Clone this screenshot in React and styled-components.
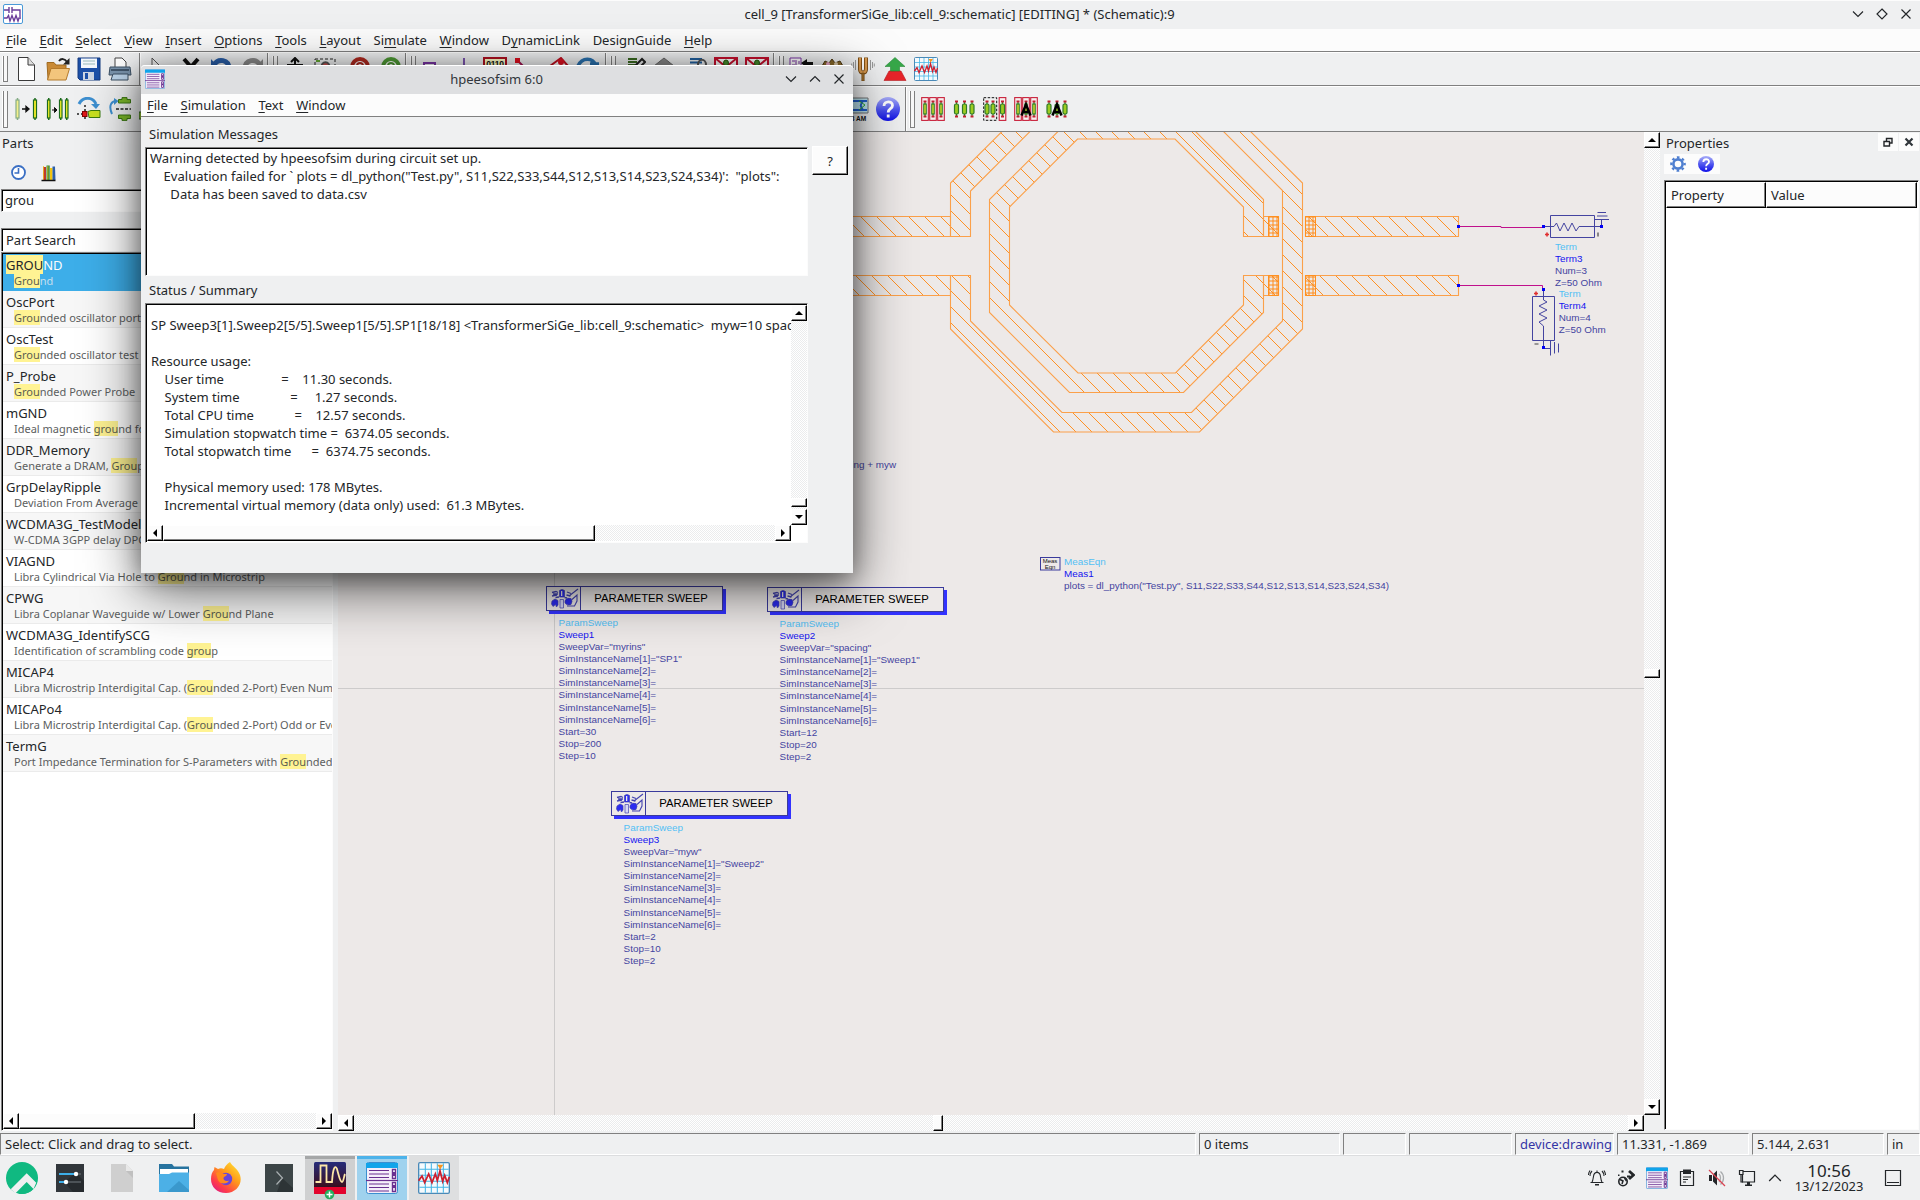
import React from "react";
import styled, { createGlobalStyle, css } from "styled-components";

const Global = createGlobalStyle`
  html, body { margin: 0; padding: 0; }
  body { width: 1920px; height: 1200px; overflow: hidden; background: #eff0f1; }
  * { box-sizing: border-box; }
  svg { display: block; flex: none; }
`;

const ink = "#232629";
const ui = `"Noto Sans", sans-serif`;
const checker = css`
  background-image: conic-gradient(#fff 25%, #ebeced 0 50%, #fff 0 75%, #ebeced 0);
  background-size: 2px 2px;
`;

/* ---------- shell ---------- */
const Desktop = styled.div`
  width: 1920px; height: 1200px; position: relative; overflow: hidden;
  display: flex; flex-direction: column;
  background: #eff0f1; color: ${ink}; font: 13px/18px ${ui};
`;
const TitleBar = styled.div`
  height: 29px; flex: none; display: flex; align-items: center; padding: 0 8px 2px 3px;
  border-top: 1px solid #fcfcfc;
`;
const TitleText = styled.div`
  flex: 1; text-align: center; white-space: pre; padding-left: ${p => p.$shift || 0}px;
`;
const WinButtons = styled.div`display: flex; gap: ${p => p.$gap}px;`;
const MenuBar = styled.div`
  height: ${p => p.$h}px; flex: none; display: flex; gap: 12.7px; padding-left: 6px; align-items: center;
  background: #fcfcfc; border-bottom: 1px solid #808080;
`;
const MenuItem = styled.span`
  white-space: pre;
  u { text-underline-offset: 2px; text-decoration-thickness: 1px; text-decoration-skip-ink: none; }
`;
const Toolbar = styled.div`
  height: ${p => p.$h}px; flex: none; display: flex; align-items: center;
  border-bottom: 1px solid #808080; border-top: 1px solid #fff;
`;
const Slot = styled.div`
  width: 24px; height: 24px; margin-left: ${p => p.$ml}px; flex: none;
`;
const Grip = styled.div`
  width: 5px; height: ${p => p.$h}px; margin-left: ${p => p.$ml}px; flex: none;
  border: 1px solid #808080; border-top: 0; border-left-color: #808080;
  box-shadow: -1px 0 #fff; background: #f8f8f8;
`;
const Divider = styled.div`
  width: 1px; align-self: stretch; margin-left: ${p => p.$ml}px; background: #808080; flex: none;
  box-shadow: 1px 0 #fff;
`;

const Workspace = styled.div`flex: 1; min-height: 0; display: flex;`;

/* ---------- scrollbars ---------- */
const Track = styled.div`
  display: flex; flex: none; ${checker}
  flex-direction: ${p => (p.$v ? "column" : "row")};
  ${p => (p.$v ? "width: 16px;" : "height: 16px;")}
`;
const Cap = styled.div`
  width: 16px; height: 16px; flex: none; background: #fcfcfc;
  display: flex; align-items: center; justify-content: center;
  border: 1px solid; border-color: #fff #000 #000 #fff; box-shadow: inset -1px -1px #808080;
`;
const Thumb = styled(Cap)`
  ${p => (p.$v ? `height: ${p.$size}px; margin-top: ${p.$at}px;` : `width: ${p.$size}px; margin-left: ${p.$at}px;`)}
`;
const Gap = styled.div`flex: 1;`;
const turns = { up: 0, right: 90, down: 180, left: 270 };
const Arrow = ({ dir }) => (
  <Cap>
    <svg width="8" height="8" viewBox="0 0 8 8" style={{ transform: `rotate(${turns[dir]}deg)` }}>
      <path d="M4 2 L8 6 H0 Z" fill="#000" />
    </svg>
  </Cap>
);
const Scroll = ({ v, at, size }) => (
  <Track $v={v}>
    <Arrow dir={v ? "up" : "left"} />
    <Thumb $v={v} $at={at} $size={size} />
    <Gap />
    <Arrow dir={v ? "down" : "right"} />
  </Track>
);

/* ---------- parts ---------- */
const Parts = styled.div`width: 334px; flex: none; display: flex; flex-direction: column;`;
const PanelTitle = styled.div`height: 22px; padding: 2px 0 0 2px;`;
const PartsTools = styled.div`height: 35px; display: flex; gap: 11px; padding: 9px 0 0 9px;`;
const SearchBox = styled.div`
  margin: 0 2px 0 1px; height: 23px; background: #fff; padding: 1px 0 0 3px;
  border: 1px solid; border-color: #808080 #fcfcfc #fcfcfc #808080; box-shadow: inset 1px 1px #000;
`;
const PartsHeader = styled(SearchBox)`margin-top: 16px; height: 23px; padding: 3px 0 0 4px; line-height: 17px; border-bottom: 0;`;
const PartsList = styled.div`
  margin: 1px 1px 2px 1px; flex: 1; min-height: 0; background: #fff; display: flex; flex-direction: column;
  border: 1px solid; border-color: #808080 #fcfcfc #fcfcfc #808080; box-shadow: inset 1px 1px #000;
  padding: 1px 0 1px 1px; overflow: hidden;
`;
const PartRow = styled.div`
  height: 37px; flex: none; overflow: hidden; white-space: pre; padding: 2px 0 0 3px;
  background: ${p => (p.$sel ? "#3daee9" : p.$alt ? "#f7f7f7" : "#fff")};
  border-bottom: 1px solid ${p => (p.$sel ? "#3daee9" : "#ebebeb")};
  color: ${p => (p.$sel ? "#fcfcfc" : ink)};
`;
const PartName = styled.div`height: 17px; line-height: 18px; mark { padding: 1px 0 0; }`;
const PartDesc = styled.div`
  height: 16px; line-height: 15px; font-size: 11px; padding-left: 8px;
  color: ${p => (p.$sel ? "#c5dfee" : "#5c5e60")};
`;
const Mark = styled.mark`background: #fff393; color: ${p => (p.$dark ? ink : "#5c5e50")};`;

const hl = (text, dark) =>
  text.split(/(grou)/i).map((s, i) => (i % 2 ? <Mark key={i} $dark={dark}>{s}</Mark> : s));

const parts = [
  ["GROUND", "Ground"],
  ["OscPort", "Grounded oscillator port"],
  ["OscTest", "Grounded oscillator test"],
  ["P_Probe", "Grounded Power Probe"],
  ["mGND", "Ideal magnetic ground for"],
  ["DDR_Memory", "Generate a DRAM, Group"],
  ["GrpDelayRipple", "Deviation From Average"],
  ["WCDMA3G_TestModel", "W-CDMA 3GPP delay DPCH"],
  ["VIAGND", "Libra Cylindrical Via Hole to Ground in Microstrip"],
  ["CPWG", "Libra Coplanar Waveguide w/ Lower Ground Plane"],
  ["WCDMA3G_IdentifySCG", "Identification of scrambling code group"],
  ["MICAP4", "Libra Microstrip Interdigital Cap. (Grounded 2-Port) Even Num"],
  ["MICAPo4", "Libra Microstrip Interdigital Cap. (Grounded 2-Port) Odd or Even"],
  ["TermG", "Port Impedance Termination for S-Parameters with Grounded"],
];

/* ---------- canvas ---------- */
const CanvasArea = styled.div`
  width: 1322px; margin-left: 4px; flex: none; display: flex; flex-direction: column; padding-bottom: 2px;
`;
const CanvasRow = styled.div`flex: 1; min-height: 0; display: flex;`;
const Canvas = styled.div`
  flex: 1; position: relative; overflow: hidden; background: #ede9e8;
`;
const HRow = styled.div`display: flex; > :first-child { width: 1306px; }`;
const Label = styled.div`
  position: absolute; left: ${p => p.$x - 338}px; top: ${p => p.$y - 132}px;
  font: 9.89px/12.13px "Liberation Sans", Arial, sans-serif; color: #4444a0; white-space: pre;
`;
const Kind = styled.div`color: #52c0f5;`;
const Inst = styled.div`color: #1414f0;`;

const SweepBox = styled.div`
  position: absolute; left: ${p => p.$x - 338}px; top: ${p => p.$y - 132}px;
  width: 177px; height: 25px; display: flex; border: 1px solid #3a3a9c; background: #ede9e8;
  font: 11.3px/23px "Liberation Sans", Arial, sans-serif; color: #000;
  > span { flex: 1; text-align: center; border-left: 1px solid #3a3a9c; padding-right: 1px; }
`;
const SweepShadow = styled.div`
  position: absolute; left: ${p => p.$x - 335}px; top: ${p => p.$y - 129}px; width: 177px; height: 25px; background: #3232ff;
`;

const SweepGlyph = () => (
  <svg width="33" height="23" viewBox="0 0 33 23">
    <g fill="#2c2cf0" stroke="#4444b0" strokeWidth="0.7">
      <path d="M5 14L8 12L11 13.500V18L9.500 20L8.500 17.500L6 19.500L4.500 17Z" />
      <path d="M12.500 3.500Q15 1.500 17.500 3.500V10H12.500Z" /><path d="M14 4h1.300v5h-1.300z" fill="#ede9e8" stroke="none" />
      <path d="M18 13.500Q20 10 24 11.500Q26 14 24 17.500Q20 19 18 16Z" />
      <path d="M5 5.500l4-1 2 1M5 9l5-1M6 7h5M20 5l4 1.500M19.500 8l4 1" fill="none" strokeWidth="1.300" />
      <path d="M22 9L31 2M25 12.500L30 8V14L27.500 19H20" fill="none" strokeWidth="1.100" />
      <path d="M13 12.500H16.500V21H13Z" fill="#d8d8f4" />
      <path d="M8.500 10.500L12 10M17.500 10.500L20 11" fill="none" strokeWidth="1.500" />
    </g>
  </svg>
);

const SweepBlock = ({ x, y, name, v, inst, start, stop, step }) => (
  <>
    <SweepShadow $x={x} $y={y} />
    <SweepBox $x={x} $y={y}>
      <SweepGlyph />
      <span>PARAMETER SWEEP</span>
    </SweepBox>
    <Label $x={x + 12.6} $y={y + 30.7}>
      <Kind>ParamSweep</Kind>
      <Inst>{name}</Inst>
      <div>{`SweepVar="${v}"`}</div>
      <div>{`SimInstanceName[1]="${inst}"`}</div>
      {[2, 3, 4, 5, 6].map(n => <div key={n}>{`SimInstanceName[${n}]=`}</div>)}
      <div>{`Start=${start}`}</div>
      <div>{`Stop=${stop}`}</div>
      <div>{`Step=${step}`}</div>
    </Label>
  </>
);

const ringShapes = [
  "M850 216.5H950.5V236.5H850Z",
  "M850 275.5H950.5V295.5H850Z",
  "M1003.5 130L950.5 183V236.5H970.5V191L1031.5 130Z",
  "M950.5 275.5H970.5V321L1062 412.5H1191.5L1282.5 321V190.5L1222 130H1249L1302.5 183V329L1199.5 432H1053.5L950.5 329Z",
  "M1059.5 130L989.5 199.5V312.5L1069.5 392.5H1183.5L1263.5 312.5V275.5H1243.5V305L1175.5 373H1078L1009.5 305V207L1077.5 139H1175L1243.5 207V236.5H1263.5V199.5L1194 130Z",
  "M1263.5 216.5H1278.5V236.5H1263.5Z",
  "M1263.5 275.5H1278.5V295.5H1263.5Z",
  "M1305.5 216.5H1458.5V236.5H1305.5Z",
  "M1305.5 275.5H1458.5V295.5H1305.5Z",
];

const Layout = () => (
  <svg width="1306" height="983" viewBox="338 132 1306 983">
    <defs>
      <pattern id="hatch" width="16" height="16" patternUnits="userSpaceOnUse">
        <path d="M3 -1L17 13M-1 11L5 17" stroke="#ff8c1a" strokeWidth="0.95" />
      </pattern>
      <pattern id="dots" width="4" height="4" patternUnits="userSpaceOnUse">
        <path d="M0 1H4M1 0V4" stroke="#ff8c1a" strokeWidth="1" />
      </pattern>
    </defs>
    <path d="M554.5 132V1115M338 688.5H1644" stroke="#cdcbcb" fill="none" />
    <g stroke="#fba04a" strokeWidth="1.1" fill="url(#hatch)">
      {ringShapes.map(d => <path key={d} d={d} />)}
    </g>
    <g fill="url(#dots)" stroke="#ff9020">
      <path d="M1268.5 216.5h10v20h-10zM1268.5 275.5h10v20h-10zM1305.5 216.5h10v20h-10zM1305.5 275.5h10v20h-10z" />
    </g>
    <path d="M1458.5 226.5H1501V227.5H1543.5M1458.5 285.5H1542.5V289.5" stroke="#c0108c" fill="none" />
    <g fill="none" stroke="#4444a0">
      <path d="M1550.5 215.5H1594.5V237.5H1550.5Z" />
      <path d="M1543.5 226.5H1554L1556.5 223L1560 231L1564 223L1568 231L1572 223L1576 231L1579 226.5H1601.5V219.5M1595 219.5H1609M1597 216H1607.5M1597.5 212.5H1606" />
      <path d="M1532.5 296.5H1554.5V340.5H1532.5Z" />
      <path d="M1543.5 289.5V300L1547 302L1539 306L1547 310L1539 314L1547 318L1539 322L1543.5 326V348.5H1550.5M1550.5 341V355.5M1554.5 342V353.5M1558.5 343.5V352.5" />
    </g>
    <path d="M1457 225h3v3h-3zM1542 225h3v3h-3zM1600 225h3v3h-3zM1457 284h3v3h-3zM1542 288h3v3h-3zM1542 346h3v3h-3z" fill="#0000f5" />
    <path d="M1545 234.5h4M1547 232.5v4M1534 293.5h4M1536 291.5v4" stroke="#e03030" strokeWidth="1.6" />
    <path d="M1598 232.5v4M1534.5 344h4" stroke="#444" strokeWidth="1.2" />
    <rect x="1040.5" y="557.5" width="19.5" height="12.5" fill="none" stroke="#3a3a9c" />
  </svg>
);
const Tiny = styled(Label)`font-size: 6px; line-height: 6px; color: #111; width: 20px; text-align: center;`;

/* ---------- properties ---------- */
const Props = styled.div`flex: 1; display: flex; flex-direction: column; padding-left: 4px;`;
const PropsTitle = styled.div`height: 22px; display: flex; justify-content: space-between; padding: 1px 1px 0 2px; span { padding-top: 1px; }`;
const DockButtons = styled.div`display: flex; gap: 1px;`;
const DockButton = styled.div`
  width: 20px; height: 18px; background: #fcfcfc; display: flex; align-items: center; justify-content: center;
`;
const PropsTools = styled.div`display: flex; width: 56px; height: 20px; padding: 2px 6px; gap: 12px; background: #fcfcfc;`;
const PropsTable = styled.div`
  margin: 6px 1px 3px 0; flex: 1; background: #fff; border: 1px solid; border-color: #808080 #fcfcfc #fcfcfc #808080;
  box-shadow: inset 1px 1px #000; padding: 1px;
`;
const HeadRow = styled.div`display: flex; height: 26px;`;
const HeadCell = styled.div`
  ${p => (p.$w ? `width: ${p.$w}px;` : "flex: 1;")} background: #fcfcfc; padding: 3px 0 0 4px;
  border: 1px solid; border-color: #fff #000 #000 #fff; box-shadow: inset -1px -1px #808080;
`;

/* ---------- status + taskbar ---------- */
const StatusBar = styled.div`height: 22px; flex: none; display: flex; gap: 3px;`;
const StatusCell = styled.div`
  ${p => (p.$w ? `width: ${p.$w}px; flex: none;` : "flex: 1;")}
  border: 1px solid; border-color: #808080 #fff #fff #808080; padding: 1px 0 0 4px; white-space: pre;
  color: ${p => p.$color || ink}; overflow: hidden;
`;
const TaskBar = styled.div`
  height: 45px; flex: none; border-top: 1px solid #dcdddf; display: flex; background: #eff0f1;
`;
const Launcher = styled.div`width: ${p => p.$w}px; display: flex; align-items: center; justify-content: center; flex: none;`;
const Task = styled.div`
  width: 50px; margin-right: 2px; flex: none; background: ${p => p.$bg}; border-top: 3px solid ${p => p.$top};
  display: flex; justify-content: center; padding-top: 3px;
`;
const Tray = styled.div`margin-left: auto; display: flex; align-items: center; padding-right: 5px;`;
const TrayIcon = styled.div`width: ${p => p.$w}px; display: flex; justify-content: center; flex: none;`;
const Clock = styled.div`
  width: 70px; margin: 0 7px 0 6px; flex: none; display: flex; flex-direction: column; align-items: center;
  line-height: 15px; font-size: 12.9px; white-space: pre;
`;
const Time = styled.div`font-size: 17px; line-height: 17px;`;

/* ---------- dialog ---------- */
const Dialog = styled.div`
  position: absolute; left: 141px; top: 65px; width: 712px; height: 508px;
  display: flex; flex-direction: column; background: #eff0f1; border-radius: 4px 4px 0 0;
  box-shadow: 0 16px 56px rgba(0, 0, 0, 0.62), 0 5px 22px rgba(0, 0, 0, 0.35);
`;
const DialogTitle = styled.div`
  height: 29px; flex: none; display: flex; align-items: center; background: #dedfe1; padding: 0 8px 2px 4px;
  border-top: 1px solid #fff; border-radius: 4px 4px 0 0; color: #31363b;
`;
const DialogBody = styled.div`flex: 1; display: flex; gap: 4px; padding: 8px 5px 0 4px;`;
const DialogMain = styled.div`width: 663px; display: flex; flex-direction: column;`;
const Caption = styled.div`height: 22px; padding-left: 4px;`;
const Sunken = styled.div`
  background: #fff; border: 1px solid; border-color: #808080 #fcfcfc #fcfcfc #808080; box-shadow: inset 1px 1px #000;
  padding: 1px; overflow: hidden; white-space: pre; height: ${p => p.$h}px; margin-bottom: ${p => p.$mb || 0}px;
`;
const Messages = styled.div`padding: 0 0 0 3px; font-size: 13.05px;`;
const SummaryGrid = styled.div`display: grid; grid-template-columns: 644px 16px; grid-template-rows: 220px 16px;`;
const SummaryText = styled.div`overflow: hidden; padding: 11px 0 0 4px;`;
const HelpButton = styled.div`
  width: 37px; height: 29px; margin-top: 21px; background: #fcfcfc; display: flex; align-items: center; justify-content: center;
  border: 1px solid; border-color: #fff #000 #000 #fff; box-shadow: inset -1px -1px #808080;
`;

/* ---------- icons ---------- */
const I = ({ s = 24, vb = 24, children }) => (
  <svg width={s} height={s} viewBox={`0 0 ${vb} ${vb}`}>{children}</svg>
);
const Chev = ({ d, w = 12 }) => (
  <svg width={w} height={w} viewBox="0 0 12 12"><path d={d} stroke={ink} strokeWidth="1.15" fill="none" /></svg>
);
const down = "M1 3.5L6 8.5L11 3.5", up = "M1 8.5L6 3.5L11 8.5", cross = "M1.5 1.5L10.5 10.5M10.5 1.5L1.5 10.5";

const AppIcon = () => (
  <svg width="20" height="20" viewBox="0 0 20 20">
    <rect x="0.5" y="0.5" width="19" height="19" rx="1.5" fill="#fff" stroke="#4a9ad8" />
    <path d="M1 6H6M6 3V9M9 3V9M9 6H17V13M1 14H4L5.5 11.5L7 17L9 11.5L11 17L13 11.5L15 17L16 14H18" fill="none" stroke="#6a3d9a" strokeWidth="1.4" />
  </svg>
);
const SimIcon = ({ w = 20, h = 24 }) => (
  <svg width={w} height={h} viewBox="0 0 32 32" preserveAspectRatio="none">
    <rect x="0.5" y="0.5" width="31" height="31" rx="2" fill="#f4eefa" stroke="#3a8fd0" />
    <path d="M0 1h32v5H0z" fill="#10a4ea" />
    <path d="M3 8.5h20M3 12h20M3 15.5h20M3 22h20M3 25.5h20M3 29h20" stroke="#6a3090" strokeWidth="1.1" />
    <path d="M0 18.5h32" stroke="#6a3090" strokeWidth="1.2" />
    <path d="M26.5 7.5h3v9h-3zM26.5 20.5h3v9h-3z" fill="#fff" stroke="#6a3090" strokeWidth="1.4" />
    <path d="M27 10h2v4h-2zM27 23h2v3h-2z" fill="#6a3090" />
  </svg>
);
const NewIcon = () => <I><path d="M3.5 .5H13L19.5 8V23.5H3.5Z" fill="#fff" stroke="#3a3a3a" /><path d="M13 .5V8H19.5" fill="#ddd" stroke="#3a3a3a" /></I>;
const OpenIcon = () => <I><path d="M1 5.5H8L10 8H20V12H6L2 22Z" fill="#c98a35" stroke="#a06a20" /><path d="M1.5 23L5 11.5H23.5L20 23Z" fill="#f3c57c" stroke="#b47a2c" /><path d="M13 4C15 1 19 1.5 21 5" fill="none" stroke="#222" strokeWidth="1.8" /><path d="M23.5 1V7.5H17Z" fill="#222" /></I>;
const SaveIcon = () => <I><path d="M1 1H23V23H3L1 21Z" fill="#1c50a8" stroke="#143a80" /><path d="M4 1.5H20V11H4Z" fill="#f4f8fc" /><path d="M6 4h12M6 7h12" stroke="#9bb" /><path d="M6 15H17V23H6Z" fill="#cdd6e4" /><path d="M8 16h3v6H8z" fill="#1c50a8" /></I>;
const PrintIcon = () => <I><path d="M7 10V1H14L18 5V11" fill="#fff" stroke="#444" /><path d="M2 10H22L23 18H1Z" fill="#7a94ad" stroke="#3c5064" /><path d="M5 17H20V23H3Z" fill="#bcd4ea" stroke="#3c5064" /><path d="M3 13h18" stroke="#42566b" strokeWidth="2" /></I>;
const CursorIcon = () => <I><path d="M4 1L14 11H9L11 17L9 18L7 12L4 14Z" fill="#eee" stroke="#555" /></I>;
const XIcon = () => <I><path d="M5 2L20 19M19 2L4 19" stroke="#111" strokeWidth="4" /></I>;
const UndoIcon = ({ c, flip }) => <I><g transform={flip ? "translate(24 0) scale(-1 1)" : ""}><path d="M4 8C8 1 19 2 19 12" fill="none" stroke={c} strokeWidth="5" /><path d="M1 2V12H10Z" fill={c} /></g></I>;
const UpArrowIcon = () => <I><path d="M12 1V16M8 5L12 1L16 5M4 8H20" stroke="#111" strokeWidth="2" fill="none" /></I>;
const SelIcon = () => <I><path d="M2 2H22V20H2Z" fill="none" stroke="#222" strokeDasharray="3 2" /><path d="M8 12C8 3 17 3 17 12" fill="#c55" stroke="#555" strokeWidth="2" /><path d="M3 3h4v2H3z" fill="#6a3" /></I>;
const ZoomIcon = ({ c, inner }) => <I><circle cx="12" cy="10" r="8" fill="#fff" stroke={c} strokeWidth="4" /><circle cx="12" cy="9" r="3" fill="none" stroke={inner} strokeWidth="2" /></I>;
const PurpleArc = () => <I><path d="M1 12H6V6H17V12H22" fill="none" stroke="#7a35a5" strokeWidth="2" /></I>;
const VLine = () => <I><path d="M12 1V20" stroke="#6030a0" strokeWidth="1.6" /></I>;
const BitsText = styled.div`
  width: 24px; height: 18px; border: 2px solid #b01020; background: #ffffc8; font: bold 8.5px/11px "Liberation Sans", sans-serif;
  text-align: center; color: #111; letter-spacing: -0.2px;
`;
const DiagIcon = () => <I><path d="M3 3L14 14" stroke="#a01050" strokeWidth="2" /><path d="M1 1h5v5H1z" fill="#e01020" /></I>;
const RedTri = () => <I><path d="M1 9L12 1L19 9Z" fill="#fff" stroke="#c01020" strokeWidth="2" /><circle cx="12" cy="5" r="3" fill="#e01020" /></I>;
const BlueArc = () => <I><path d="M2 9C6 0 17 0 20 9M14 7H23" fill="none" stroke="#2a72b0" strokeWidth="3.5" /></I>;
const EditIcon = () => <I><path d="M6 2h9M6 5h9M6 8h9" stroke="#3a6a20" strokeWidth="1.8" /><path d="M13 9L20 2L23 5L19 9" stroke="#222" strokeWidth="2" fill="none" /></I>;
const GrayTri = () => <I><path d="M12 1L22 9H2Z" fill="#888" stroke="#666" /></I>;
const LockIcon = () => <I><path d="M3 2h12M3 5.5h12M3 9h12" stroke="#2060a0" strokeWidth="2" /><path d="M11 8C11 1 19 1 19 8" fill="none" stroke="#555" strokeWidth="2" /><path d="M9 8h12v6H9z" fill="#a07840" /></I>;
const RedBox = () => <I><path d="M1 1H23V20H1Z" fill="#fff" stroke="#c8102e" strokeWidth="2" /><path d="M1 1L12 10L23 1" stroke="#c8102e" strokeWidth="2" fill="none" /><ellipse cx="12" cy="6" rx="2.5" ry="3" fill="#4a9030" stroke="#2a5a10" /></I>;
const NodeArrow = () => <I><path d="M1 1H12V12H1Z" fill="#fff" stroke="#7a35a5" /><path d="M3 4h3M7 3v5M3 8h3M10 4v3" stroke="#7a35a5" /><path d="M12 6L18 2V5H24V8H18V11Z" fill="#111" /></I>;
const GearsIcon = () => <I><path d="M2 9L5 4L9 6L12 2L15 6L20 4L23 9Z" fill="#8a6a2a" stroke="#4a3510" /><circle cx="8" cy="7" r="2" fill="#eac" /><circle cx="16" cy="7" r="2" fill="#dca" /></I>;
const ForkIcon = () => <I><path d="M9 .5V12C9 14.5 10.5 15.5 12 15.5C13.5 15.5 15 14.5 15 12V.5" fill="#fff" stroke="#7a4a10" strokeWidth="4" /><path d="M9 1V12C9 14.5 10.5 15.5 12 15.5C13.5 15.5 15 14.5 15 12V1" fill="none" stroke="#d99a50" strokeWidth="2.2" /><path d="M10.8 16h2.4v8h-2.4z" fill="#a8732c" stroke="#6a4510" strokeWidth=".6" /><path d="M4.5 3v10M19.5 3v10M2.5 5v6M21.5 5v6M0.7 6.5v3M23.3 6.5v3" stroke="#999" /></I>;
const TreeIcon = () => <I><path d="M6 14H18L23 23.5H1Z" fill="#e8252a" stroke="#b81a20" strokeWidth=".6" /><path d="M12 0.5L22 9.5H16.5V14H7.5V9.5H2Z" fill="#37a849" stroke="#268a38" strokeWidth=".6" /></I>;
const Chart = ({ s = 24 }) => (
  <I s={s}>
    <rect x="0.5" y="0.5" width="23" height="23" rx="1" fill="#f5fafd" stroke="#4a8ab8" />
    <path d="M1 5.5H23M1 10H23M1 14.5H23M1 19H23M5.5 1V23M10 1V23M14.5 1V23M19 1V23" stroke="#46b6e6" strokeWidth=".8" />
    <path d="M0.5 14L3 10.5L5 15.5L8 9L10.5 15.5L13 9L14.5 14L16.5 6.5L18.5 14.5L20 10L22 15.5L23.5 11" fill="none" stroke="#cc2030" strokeWidth="1.3" />
    <path d="M14.5 2H19L16.7 5.5Z" fill="#f7941d" />
  </I>
);
const Bar = ({ x, y = 2, w = 3, h = 20, c = "#f7f12a", o = 1 }) => (
  <g opacity={o}><rect x={x} y={y + 1} width={w} height={h - 2} fill={c} stroke="#1d6b1d" strokeWidth="1.2" /><path d={`M${x + w / 2} ${y - 1}v2M${x + w / 2} ${y + h - 1}v2`} stroke="#1d6b1d" strokeWidth="1.5" /></g>
);
const Move1 = () => <I><Bar x={1} o={0.5} /><Bar x={18.5} /><path d="M7 12H12M11 9.500V14.500L14 12Z" fill="#111" stroke="#111" strokeWidth="1.3" /></I>;
const Move2 = () => <I><Bar x={1.5} w={2.5} /><Bar x={13.5} w={2.5} /><Bar x={19.5} w={2.5} /><path d="M6 13H9M8.5 10.500V15.500L11 13Z" fill="#111" stroke="#111" /></I>;
const Rotate = () => <I><path d="M2 7C6 -1 16 0 19 7" fill="none" stroke="#3d8fd0" strokeWidth="3" /><path d="M14 7H23L19 12Z" fill="#3d8fd0" /><path d="M8 8V24M0 17H8" stroke="#222" strokeDasharray="2 2" strokeWidth="1.5" /><rect x="5.5" y="14.5" width="4.5" height="5" fill="#e01a1a" stroke="#800" /><path d="M11 14.5L14 13.5H23V20.5H12Z" fill="#c8e020" stroke="#3a7a10" /></I>;
const Flip = () => <I><path d="M3 17C-1 8 3 4 7 4" fill="none" stroke="#3d8fd0" strokeWidth="2" /><path d="M5 1L9.5 4L5 8Z" fill="#3d8fd0" /><path d="M7 12H22" stroke="#222" strokeDasharray="3 1.5" strokeWidth="1.3" /><path d="M9.500 2.500H13V.600H18V2.500H21.500V6H9.500ZM9.500 18H21.500V21.500H18V23.400H13V21.500H9.500Z" fill="#7cb82a" stroke="#3d7a14" /></I>;
const Mirror = () => <I><path d="M0 15H4V22H0Z" fill="#9c3" stroke="#363" /></I>;
const TimeIcon = () => <I><path d="M0 1H23V16H0Z" fill="#bfe8f4" stroke="#777" /><path d="M0 4H22M0 13H22M4 4C8 8 8 9 4 13M18 4C15 8 15 9 18 13" stroke="#2060d0" strokeWidth="2" fill="none" /><path d="M14 4L20 8L14 13" stroke="#3a3" fill="none" /><text x="0" y="23.5" fontSize="6.5" fontWeight="bold" fontFamily="Liberation Sans, sans-serif" fill="#111">:23 AM</text></I>;
const HelpIcon = ({ s = 24 }) => (
  <I s={s}>
    <defs><linearGradient id="hg" x2="0" y2="1"><stop offset="0" stopColor="#a9aef8" /><stop offset=".55" stopColor="#4a50ee" /><stop offset="1" stopColor="#1010e8" /></linearGradient></defs>
    <circle cx="12" cy="12" r="12" fill="url(#hg)" />
    <path d="M8 9C8 3.5 16.5 3.5 16.5 8.5C16.5 12 12.2 11.5 12.2 15.5M12.2 17.5V20.5" fill="none" stroke="#fff" strokeWidth="2.8" />
  </I>
);
const Chip = ({ x, open }) => {
  const w = open ? 4 : 2.4;
  return (
    <g>
      <path d={`M${x} 4v16`} stroke="#2f7a28" strokeWidth="1.2" />
      <path d={`M${x - 1.5} 4.5h3M${x - 1.5} 19.5h3`} stroke="#c02030" strokeWidth="2" />
      <rect x={x - w / 2} y="7" width={w} height="10" rx={open ? 1.5 : 0} fill={open ? "#9ccc20" : "#f7f12a"} stroke="#2f7a28" strokeWidth="1.2" />
    </g>
  );
};
const Frame = ({ x }) => <rect x={x - 3.3} y=".6" width="6.6" height="22.8" fill="#f6f0f0" stroke="#c8203a" strokeWidth="1.1" />;
const Big = ({ x }) => <path d={`M${x - 4.5} 18.500L${x} 7.500L${x + 4.5} 18.500M${x - 3} 15H${x + 3}`} fill="none" stroke="#000" strokeWidth="2.5" />;
const Set1 = () => <I><Frame x={4} /><Frame x={12} /><Frame x={20} /><Chip x={4} /><Chip x={12} /><Chip x={20} /></I>;
const Set2 = () => <I><Chip x={4.5} open /><Chip x={12.5} open /><Chip x={20} open /></I>;
const Set3 = () => <I><rect x=".7" y=".7" width="13" height="22.6" fill="none" stroke="#111" strokeDasharray="2.5 1.5" /><Frame x={19.5} /><Chip x={4} open /><Chip x={10} open /><Chip x={19.5} open /></I>;
const Set4 = () => <I><Frame x={4} /><Frame x={12} /><Frame x={20} /><Chip x={4} /><Chip x={12} /><Chip x={20} /><Big x={12} /></I>;
const Set5 = () => <I><Chip x={4} open /><Chip x={12} open /><Chip x={20} open /><Big x={12} /></I>;

const ClockIcon = () => <I s={20} vb={20}><circle cx="9.500" cy="9.5" r="6.5" fill="#fff" stroke="#3a6fc4" strokeWidth="1.8" /><path d="M9.5 5V10H5.5" fill="none" stroke="#3a6fc4" strokeWidth="1.6" /></I>;
const BooksIcon = () => <I s={20} vb={20}><path d="M3 4h3v13H3z" fill="#c0392b" /><path d="M6.500 2.5h3.200v14.5H6.500z" fill="#2f8a3a" /><path d="M10 5h2.500v12H10z" fill="#f1c40f" /><path d="M12.500 3.500h2.500l.5 13.500h-3z" fill="#2c5fa8" /><path d="M3.500 3v14M7.800 3v14" stroke="#f0c020" strokeWidth=".8" /><path d="M1.500 17.5h14" stroke="#111" strokeWidth="1.5" /></I>;
const Gear = () => <I s={16} vb={16}><circle cx="8" cy="8" r="4.6" fill="none" stroke="#4f7fd0" strokeWidth="2.6" /><circle cx="8" cy="8" r="6.7" fill="none" stroke="#4f7fd0" strokeWidth="2.2" strokeDasharray="2.63 2.63" strokeDashoffset="1.3" /></I>;

const Rocky = () => <I s={32} vb={32}><circle cx="16" cy="16" r="16" fill="#10b981" /><path d="M4.7 27.3L20.7 11.3L30.2 20.8L27.5 27L20.7 20L9.5 31.2Z" fill="#eff0f1" /><path d="M12.5 31.7L20.7 23.5L26 28.5C22 31.5 17 32.5 12.5 31.7Z" fill="#10b981" /></I>;
const Settings = () => <I s={28} vb={28}><path d="M0 0H28V28H0Z" fill="#31363b" /><path d="M20 9L28 17V28H17L8 18Z" fill="#262a2e" /><path d="M3 10H20M3 18H9" stroke="#3daee9" strokeWidth="1.8" /><path d="M20 10H25M10 18H25" stroke="#5a6066" strokeWidth="1.5" /><circle cx="20" cy="10" r="2.2" fill="#fff" /><circle cx="10" cy="18" r="2.2" fill="#fff" /></I>;
const Doc = () => <svg width="22" height="28" viewBox="0 0 22 28"><path d="M0 0H15L22 7V28H0Z" fill="#cfcfcf" /><path d="M15 0V7H22Z" fill="#e8e8e8" /><path d="M15 7L22 14V7Z" fill="#c0c0c0" /></svg>;
const Folder = () => <svg width="30" height="28" viewBox="0 0 30 28"><path d="M0 0H13L15 2.5H30V10H0Z" fill="#27739f" /><path d="M1 5H29V11H1Z" fill="#fff" /><path d="M0 10H10L13 8.5H30V28H0Z" fill="#4cb0e6" /><path d="M8 28L20 17L30 26V28Z" fill="#3a98cc" /></svg>;
const Firefox = () => (
  <I s={32} vb={32}>
    <defs><linearGradient id="ff" x1="1" y1="0" x2=".2" y2="1"><stop offset="0" stopColor="#fff03a" /><stop offset=".45" stopColor="#ff9a1a" /><stop offset=".8" stopColor="#ff3b4a" /><stop offset="1" stopColor="#e02080" /></linearGradient></defs>
    <path d="M20 0C22 4 28 7 30 13C33 22 26 31 16 31C7 31 1 25 1 17C1 13 2 10 4 8L4.5 5L8 7C10 6 12 6 14 7C15 4 17 2 20 0Z" fill="url(#ff)" />
    <circle cx="16" cy="17" r="6.2" fill="#6a45d8" />
    <path d="M6 11C9 9 12 10 13 12H17C17 14 14 14.5 13.5 16C13 18 16 20 19 18.5C18 22 10 23 8 18Z" fill="#ff8a1c" />
  </I>
);
const Konsole = () => <I s={28} vb={28}><path d="M0 0H28V28H0Z" fill="#3c4547" /><path d="M17 14L28 24V28H12Z" fill="#2d3436" /><path d="M11.5 7.5L17.5 14L11.5 20.5" fill="none" stroke="#aab0b2" strokeWidth="1.2" /></I>;
const Wave = () => (
  <svg width="32" height="38" viewBox="0 0 32 38">
    <defs><linearGradient id="wv" x2="0" y2="1"><stop offset="0" stopColor="#262c7a" /><stop offset=".7" stopColor="#3a1228" /><stop offset="1" stopColor="#1a0a10" /></linearGradient></defs>
    <rect width="32" height="32" rx="1.5" fill="url(#wv)" /><path d="M0 25H32V31Q32 32 31 32H1Q0 32 0 31Z" fill="#e4032c" />
    <path d="M1.5 20H6.5V3.5H12.5V20H18C19 5 21 3 23 7C25 14 26 20 28 20C29.5 20 30 14 31 12" fill="none" stroke="#fde7a8" strokeWidth="1.8" />
    <circle cx="15.5" cy="32.5" r="4.8" fill="#27ae60" /><path d="M12.5 32.5H18.5M15.5 29.5V35.5" stroke="#fff" strokeWidth="1.5" />
  </svg>
);
const Bell = () => <I s={18} vb={18}><path d="M2.5 13.5H15.5M4 13C5.5 11.5 5 6 6.5 4.5C8 3 10 3 11.5 4.5C13 6 12.5 11.5 14 13M9 3V1.5M4 2C2.5 3.5 2 5 2 7M14 2C15.5 3.5 16 5 16 7M2 1.5C1 3 .5 4 .5 6M16 1.5C17 3 17.5 4 17.5 6" fill="none" stroke={ink} strokeWidth="1.1" /><path d="M7 15h4v1.5H7z" fill={ink} /></I>;
const Orbit = () => <I s={18} vb={18}><circle cx="6" cy="12.5" r="4.2" fill="none" stroke={ink} strokeWidth="1.6" /><path d="M3 10.5l3 1.5-1 3M7.5 9l2 3" stroke={ink} strokeWidth="1.5" fill="none" /><path d="M4.5 1.500h2v2h-2zM1 5.500h1.5v1.5H1zM10 6.5h3v2h-3z" fill={ink} /><path d="M12 2L16.5 6L12 10" fill="none" stroke={ink} strokeWidth="2.8" /></I>;
const Clip = () => <svg width="16" height="18" viewBox="0 0 16 18"><path d="M1.5 2.5H14.5V16.5H1.5Z" fill="none" stroke={ink} strokeWidth="1.2" /><path d="M4 0.5H12V5H4Z" fill={ink} /><path d="M4 8H12M4 10.5H9M4 13H7" stroke={ink} /></svg>;
const Mute = () => <I s={18} vb={18}><path d="M1 6H4V12H1ZM5 5.5L9 1.5V16.5L5 12.5Z" fill={ink} /><path d="M11 5C13 7 13 11 11 13M12.5 2.5C16.5 6 16.5 12 12.5 15.5" fill="none" stroke="#a9abad" strokeWidth="1.3" /><path d="M1 1L17 17" stroke="#da4453" strokeWidth="1.2" /></I>;
const Net = () => <I s={18} vb={18}><path d="M5 2.5H16.5V13H4.5V6" fill="none" stroke={ink} strokeWidth="1.2" /><path d="M1.5 1.5H5V5.5H1.5ZM3 5.5V13H5" fill="none" stroke={ink} strokeWidth="1.2" /><path d="M9 13h3v2.5h2V17H7v-1.5h2z" fill={ink} /></I>;
const Screen = () => <I s={18} vb={18}><path d="M1.5 1.5H16.5V16.5H1.5Z M3 13.5H15" fill="none" stroke={ink} strokeWidth="1.2" /></I>;
const Restore = () => <I s={10} vb={10}><path d="M3.5 4V1.5H9V6H7M1 4.5H6.5V9H1ZM3.5 1.5H9M1 4.5H6.5" fill="none" stroke={ink} strokeWidth="1.4" /></I>;
const BoldX = () => <I s={10} vb={10}><path d="M1.5 1.5L8.5 8.5M8.5 1.5L1.5 8.5" stroke="#31363b" strokeWidth="2.2" /></I>;

const menus = [["", "F", "ile"], ["", "E", "dit"], ["", "S", "elect"], ["", "V", "iew"], ["", "I", "nsert"], ["", "O", "ptions"], ["", "T", "ools"], ["", "L", "ayout"], ["Si", "m", "ulate"], ["", "W", "indow"], ["D", "y", "namicLink"], ["DesignGuide", "", ""], ["", "H", "elp"]];
const dialogMenus = [["", "F", "ile"], ["", "S", "imulation"], ["", "T", "ext"], ["", "W", "indow"]];
const Menu = ({ items, h }) => (
  <MenuBar $h={h}>{items.map(([a, b, c]) => <MenuItem key={a + b + c}>{a}<u>{b}</u>{c}</MenuItem>)}</MenuBar>
);

const messages = `Warning detected by hpeesofsim during circuit set up.
    Evaluation failed for \` plots = dl_python("Test.py", S11,S22,S33,S44,S12,S13,S14,S23,S24,S34)':  "plots":
      Data has been saved to data.csv`;
const summary = `SP Sweep3[1].Sweep2[5/5].Sweep1[5/5].SP1[18/18] <TransformerSiGe_lib:cell_9:schematic>  myw=10 spacing=20

Resource usage:
    User time                 =    11.30 seconds.
    System time               =     1.27 seconds.
    Total CPU time            =    12.57 seconds.
    Simulation stopwatch time =  6374.05 seconds.
    Total stopwatch time      =  6374.75 seconds.

    Physical memory used: 178 MBytes.
    Incremental virtual memory (data only) used:  61.3 MBytes.`;

export default function App() {
  return (
    <Desktop>
      <Global />
      <TitleBar>
        <AppIcon />
        <TitleText $shift={44}>cell_9 [TransformerSiGe_lib:cell_9:schematic] [EDITING] * (Schematic):9</TitleText>
        <WinButtons $gap={12}><Chev d={down} /><Chev d="M6 1L11 6L6 11L1 6Z" /><Chev d={cross} /></WinButtons>
      </TitleBar>
      <Menu items={menus} h={23} />

      <Toolbar $h={34}>
        <Grip $ml={3} $h={26} />
        <Slot $ml={7}><NewIcon /></Slot><Slot $ml={7}><OpenIcon /></Slot><Slot $ml={7}><SaveIcon /></Slot><Slot $ml={7}><PrintIcon /></Slot>
        <Divider $ml={7} />
        <Slot $ml={8}><CursorIcon /></Slot><Slot $ml={7}><XIcon /></Slot>
        <Slot $ml={7}><UndoIcon c="#2a5fa8" /></Slot><Slot $ml={6}><UndoIcon c="#8a8a8a" flip /></Slot>
        <Divider $ml={3} /><Grip $ml={5} $h={26} />
        <Slot $ml={5}><UpArrowIcon /></Slot><Slot $ml={6}><SelIcon /></Slot><Slot $ml={11}><ZoomIcon c="#b02a20" inner="#b02a20" /></Slot><Slot $ml={7}><ZoomIcon c="#4f9a35" inner="#4f9a35" /></Slot>
        <Divider $ml={2} /><Grip $ml={5} $h={26} />
        <Slot $ml={2}><PurpleArc /></Slot><Slot $ml={10}><VLine /></Slot><Slot $ml={7}><BitsText>0110</BitsText></Slot><Slot $ml={7}><DiagIcon /></Slot><Slot $ml={11}><RedTri /></Slot><Slot $ml={3}><BlueArc /></Slot>
        <Divider $ml={5} /><Grip $ml={5} $h={26} />
        <Slot $ml={6}><EditIcon /></Slot><Slot $ml={6}><GrayTri /></Slot><Slot $ml={11}><LockIcon /></Slot><Slot $ml={3}><RedBox /></Slot><Slot $ml={7}><RedBox /></Slot>
        <Divider $ml={4} /><Grip $ml={5} $h={26} />
        <Slot $ml={5}><NodeArrow /></Slot><Slot $ml={7}><GearsIcon /></Slot><Slot $ml={7}><ForkIcon /></Slot><Slot $ml={8}><TreeIcon /></Slot><Slot $ml={7}><Chart /></Slot>
      </Toolbar>

      <Toolbar $h={46}>
        <Grip $ml={3} $h={37} />
        <Slot $ml={7}><Move1 /></Slot><Slot $ml={7}><Move2 /></Slot><Slot $ml={7}><Rotate /></Slot><Slot $ml={8}><Flip /></Slot><Slot $ml={6}><Mirror /></Slot>
        <Slot $ml={682}><TimeIcon /></Slot><Slot $ml={7}><HelpIcon /></Slot>
        <Divider $ml={5} /><Grip $ml={4} $h={37} />
        <Slot $ml={6}><Set1 /></Slot><Slot $ml={7}><Set2 /></Slot><Slot $ml={7}><Set3 /></Slot><Slot $ml={7}><Set4 /></Slot><Slot $ml={7}><Set5 /></Slot>
      </Toolbar>

      <Workspace>
        <Parts>
          <PanelTitle>Parts</PanelTitle>
          <PartsTools><ClockIcon /><BooksIcon /></PartsTools>
          <SearchBox>grou</SearchBox>
          <PartsHeader>Part Search</PartsHeader>
          <PartsList>
            {parts.map(([name, desc], i) => (
              <PartRow key={name} $sel={i === 0} $alt={i % 2 === 1}>
                <PartName>{hl(name, true)}</PartName>
                <PartDesc $sel={i === 0}>{hl(desc)}</PartDesc>
              </PartRow>
            ))}
            <Gap />
            <Scroll at={0} size={176} />
          </PartsList>
        </Parts>

        <CanvasArea>
          <CanvasRow>
            <Canvas>
              <Layout />
              <Label $x={830.5} $y={459}>spacing + myw</Label>
              <SweepBlock x={546} y={586} name="Sweep1" v="myrins" inst="SP1" start={30} stop={200} step={10} />
              <SweepBlock x={767} y={587} name="Sweep2" v="spacing" inst="Sweep1" start={12} stop={20} step={2} />
              <SweepBlock x={611} y={791} name="Sweep3" v="myw" inst="Sweep2" start={2} stop={10} step={2} />
              <Label $x={1555} $y={240.6}><Kind>Term</Kind><Inst>Term3</Inst><div>Num=3</div><div>Z=50 Ohm</div></Label>
              <Label $x={1558.7} $y={287.6}><Kind>Term</Kind><Inst>Term4</Inst><div>Num=4</div><div>Z=50 Ohm</div></Label>
              <Tiny $x={1040} $y={557.5}>Meas<br />Eqn</Tiny>
              <Label $x={1064} $y={556}><Kind>MeasEqn</Kind><Inst>Meas1</Inst><div>plots = dl_python("Test.py", S11,S22,S33,S44,S12,S13,S14,S23,S24,S34)</div></Label>
            </Canvas>
            <Scroll v at={521} size={9} />
          </CanvasRow>
          <HRow><Scroll at={579} size={10} /></HRow>
        </CanvasArea>

        <Props>
          <PropsTitle><span>Properties</span><DockButtons><DockButton><Restore /></DockButton><DockButton><BoldX /></DockButton></DockButtons></PropsTitle>
          <PropsTools><Gear /><HelpIcon s={16} /></PropsTools>
          <PropsTable><HeadRow><HeadCell $w={100}>Property</HeadCell><HeadCell>Value</HeadCell></HeadRow></PropsTable>
        </Props>
      </Workspace>

      <StatusBar>
        <StatusCell $w={1196}>Select: Click and drag to select.</StatusCell>
        <StatusCell $w={141}>0 items</StatusCell>
        <StatusCell $w={63} />
        <StatusCell $w={103} />
        <StatusCell $w={99} $color="#3535a5">device:drawing</StatusCell>
        <StatusCell $w={132}>11.331, -1.869</StatusCell>
        <StatusCell $w={132}>5.144, 2.631</StatusCell>
        <StatusCell>in</StatusCell>
      </StatusBar>

      <TaskBar>
        <Launcher $w={44}><Rocky /></Launcher>
        <Launcher $w={52}><Settings /></Launcher>
        <Launcher $w={52}><Doc /></Launcher>
        <Launcher $w={52}><Folder /></Launcher>
        <Launcher $w={52}><Firefox /></Launcher>
        <Launcher $w={53}><Konsole /></Launcher>
        <Task $bg="#cfd0d1" $top="#a5a7a8"><Wave /></Task>
        <Task $bg="#9fd2ee" $top="#4db3ea"><SimIcon w={32} h={32} /></Task>
        <Task $bg="#dedfe0" $top="#dedfe0"><Chart s={32} /></Task>
        <Tray>
          <TrayIcon $w={30}><Bell /></TrayIcon>
          <TrayIcon $w={28}><Orbit /></TrayIcon>
          <TrayIcon $w={33}><SimIcon w={22} h={22} /></TrayIcon>
          <TrayIcon $w={28}><Clip /></TrayIcon>
          <TrayIcon $w={31}><Mute /></TrayIcon>
          <TrayIcon $w={30}><Net /></TrayIcon>
          <TrayIcon $w={26}><Chev d={up} w={14} /></TrayIcon>
          <Clock><Time>10:56</Time>13/12/2023</Clock>
          <TrayIcon $w={44}><Screen /></TrayIcon>
        </Tray>
      </TaskBar>

      <Dialog>
        <DialogTitle>
          <SimIcon w={20} h={20} />
          <TitleText $shift={43}>hpeesofsim 6:0</TitleText>
          <WinButtons $gap={12}><Chev d={down} /><Chev d={up} /><Chev d={cross} /></WinButtons>
        </DialogTitle>
        <Menu items={dialogMenus} h={23} />
        <DialogBody>
          <DialogMain>
            <Caption>Simulation Messages</Caption>
            <Sunken $h={129} $mb={5}><Messages>{messages}</Messages></Sunken>
            <Caption>Status / Summary</Caption>
            <Sunken $h={240}>
              <SummaryGrid>
                <SummaryText>{summary}</SummaryText>
                <Scroll v at={177} size={9} />
                <Scroll at={0} size={432} />
              </SummaryGrid>
            </Sunken>
          </DialogMain>
          <HelpButton>?</HelpButton>
        </DialogBody>
      </Dialog>
    </Desktop>
  );
}
